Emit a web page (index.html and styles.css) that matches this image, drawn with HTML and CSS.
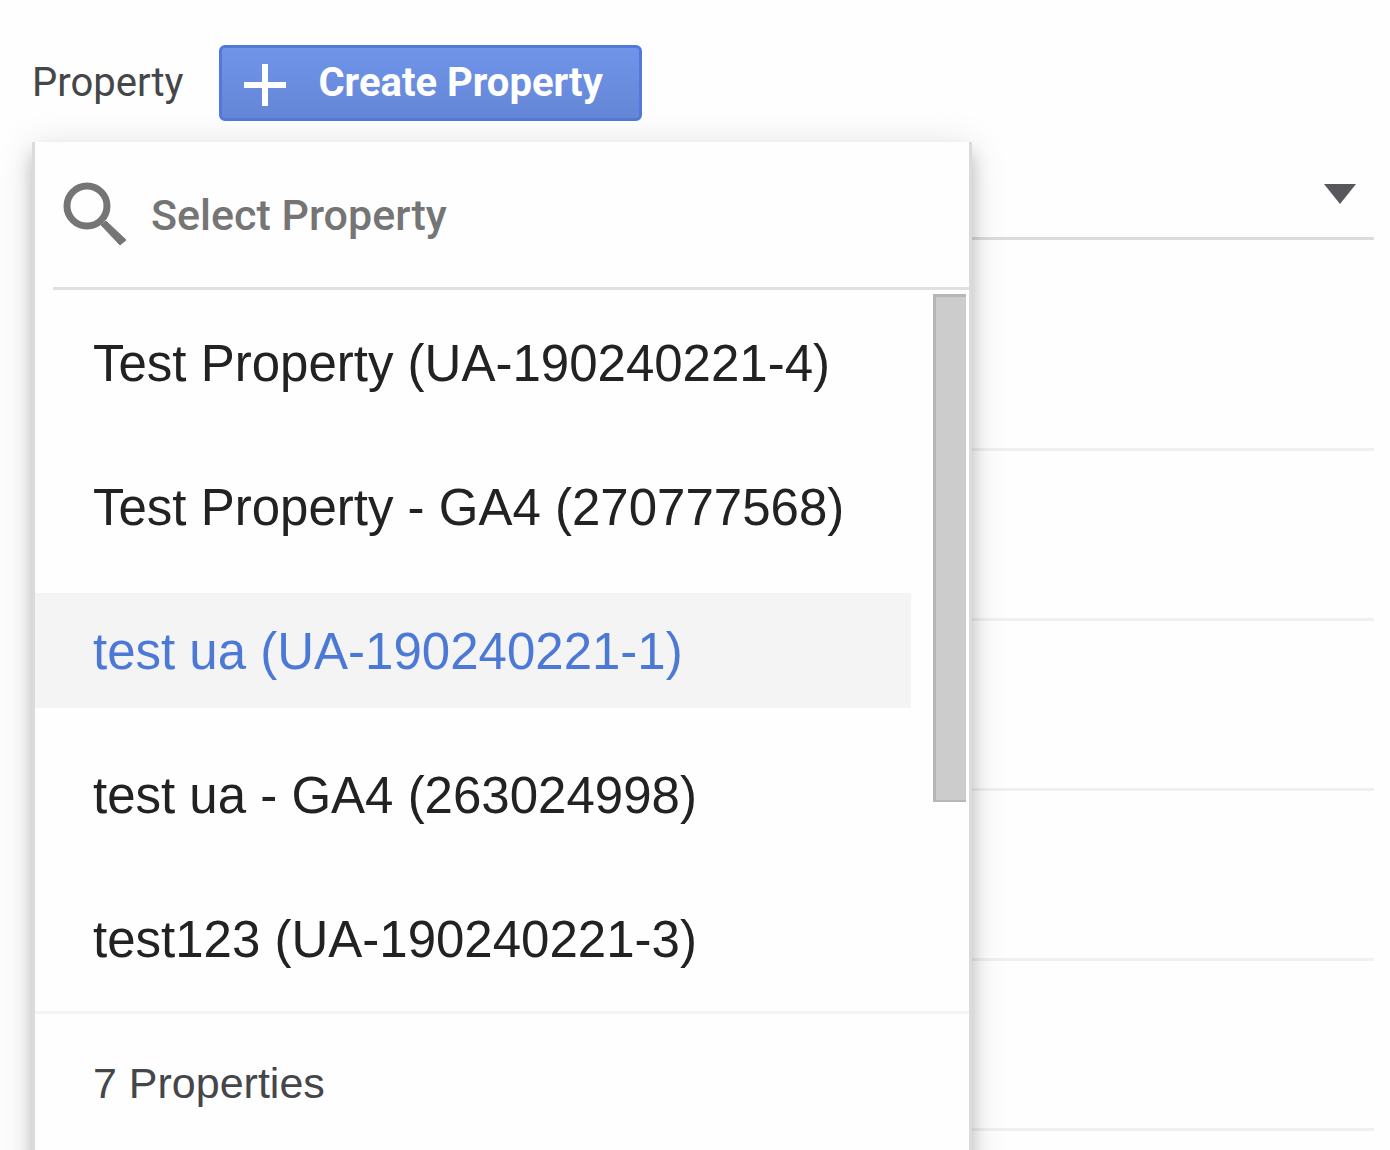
FILE: index.html
```html
<!DOCTYPE html>
<html lang="en">
<head>
<meta charset="utf-8">
<meta name="viewport" content="width=device-width, initial-scale=1">
<title>Property</title>
<link rel="stylesheet" href="styles.css">
</head>
<body>
<main class="page">
  <header class="column-header">
    <span class="column-title" id="property-label">Property</span>
    <button class="create-button" type="button">
      <svg class="plus-icon" viewBox="0 0 42 42" aria-hidden="true"><path d="M18 0h6v18h18v6H24v18h-6V24H0v-6h18z" fill="currentColor"/></svg>
      <span>Create Property</span>
    </button>
  </header>

  <section class="picker">
    <button class="picker-trigger" type="button" aria-expanded="true" aria-haspopup="true" aria-labelledby="property-label">
      <svg class="arrow-icon" viewBox="0 0 32 20" aria-hidden="true"><path d="M0 0h32L16 20z" fill="currentColor"/></svg>
    </button>
    <div class="settings">
      <div class="settings-row settings-row-first"></div>
      <div class="settings-row"></div>
      <div class="settings-row"></div>
      <div class="settings-row"></div>
      <div class="settings-row"></div>
    </div>

    <div class="menu">
      <label class="search">
        <svg class="search-icon" viewBox="0 0 64 64" aria-hidden="true">
          <circle cx="24" cy="23" r="20" fill="none" stroke="currentColor" stroke-width="7"/>
          <path d="M38 42l5-4 20 19-6 5z" fill="currentColor" stroke="currentColor" stroke-width="1"/>
        </svg>
        <input class="search-input" type="text" placeholder="Select Property" aria-label="Select Property">
      </label>
      <div class="results">
        <ul class="property-list">
          <li><a class="property" href="#">Test Property (UA-190240221-4)</a></li>
          <li><a class="property" href="#">Test Property - GA4 (270777568)</a></li>
          <li><a class="property property-current" href="#" aria-current="true">test ua (UA-190240221-1)</a></li>
          <li><a class="property" href="#">test ua - GA4 (263024998)</a></li>
          <li><a class="property" href="#">test123 (UA-190240221-3)</a></li>
        </ul>
        <div class="scroll-track"><div class="scroll-thumb"></div></div>
      </div>
      <p class="count">7 Properties</p>
    </div>
  </section>
</main>
</body>
</html>
```
FILE: styles.css
```css
* {
  box-sizing: border-box;
}

body {
  margin: 0;
  background: #fefefe;
  color: #444649;
  font-family: Roboto, sans-serif;
}

.page {
  height: 100vh;
  overflow: hidden;
  padding: 45px 16px 0 32px;
}

/* Title row */
.column-header {
  position: relative;
  z-index: 2;
  display: flex;
  align-items: center;
  gap: 36px;
  margin-bottom: 21px;
}

.column-title {
  font-size: 40px;
  line-height: 48px;
}

.create-button {
  display: flex;
  align-items: center;
  gap: 32px;
  height: 76px;
  padding: 0 36px 0 22px;
  border: 3px solid #5079d9;
  border-radius: 6px;
  background: linear-gradient(#6f94e9, #6586d6);
  color: #fff;
  font: 700 40px/48px Roboto, sans-serif;
  white-space: nowrap;
}

.plus-icon {
  width: 42px;
  height: 42px;
  margin-top: 4px;
}

/* Closed control and the rows beneath it */
.picker {
  position: relative;
}

.picker-trigger {
  display: flex;
  align-items: center;
  justify-content: flex-end;
  width: 100%;
  height: 98px;
  padding: 8px 18px 0 0;
  border: 0;
  border-bottom: 3px solid #dcdcdc;
  background: none;
  color: #56585c;
}

.arrow-icon {
  width: 32px;
  height: 20px;
}

.settings-row {
  height: 170px;
  border-bottom: 3px solid #f0f0f0;
}

.settings-row-first {
  height: 211px;
}

/* Open menu */
.menu {
  position: absolute;
  top: 0;
  left: 0;
  width: min(940px, 100%);
  border: solid #d9dbdf;
  border-width: 0 3px;
  background: #fefefe;
  box-shadow: 0 12px 16px rgba(0, 0, 0, .2), 0 4px 36px rgba(0, 0, 0, .12);
}

.search {
  display: flex;
  align-items: center;
  gap: 24px;
  height: 148px;
  margin-left: 18px;
  padding-left: 10px;
  border-bottom: 3px solid #e0e0e0;
  color: #757575;
}

.search-icon {
  flex: none;
  width: 64px;
  height: 64px;
  overflow: visible;
}

.search-input {
  flex: 1;
  min-width: 0;
  padding: 0;
  border: 0;
  outline: 0;
  background: none;
  color: #444649;
  font: 500 43px/50px Roboto, sans-serif;
}

.search-input::placeholder {
  color: #757575;
  opacity: 1;
}

.results {
  display: flex;
  gap: 22px;
  border-bottom: 3px solid #f4f4f4;
}

.property-list {
  display: flex;
  flex: 1;
  flex-direction: column;
  gap: 29px;
  margin: 0;
  padding: 15px 0;
  list-style: none;
}

.property {
  display: block;
  padding: 3px 0 0 58px;
  color: #222;
  font: 51px/112px "Liberation Sans", Arial, sans-serif;
  text-decoration: none;
  white-space: nowrap;
}

.property-current {
  background: #f4f4f4;
  color: #4d79d6;
}

.scroll-track {
  width: 36px;
  padding: 4px 3px 0 0;
}

.scroll-thumb {
  height: 508px;
  border: solid #b7b7b7;
  border-width: 3px 0 2px 3px;
  background: #ccc;
}

.count {
  margin: 0;
  padding: 44px 58px 80px;
  font: 43px/50px "Liberation Sans", Arial, sans-serif;
}
```
